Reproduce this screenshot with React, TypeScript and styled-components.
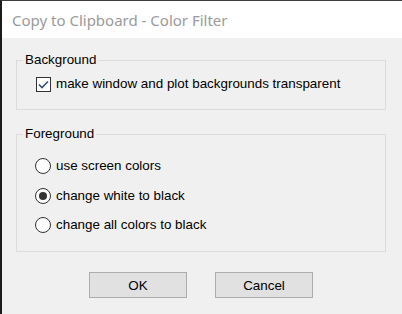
import styled, { createGlobalStyle } from 'styled-components'

const GlobalStyle = createGlobalStyle`
  html, body {
    margin: 0;
    padding: 0;
    background: #f0f0f0;
  }
  * {
    box-sizing: border-box;
  }
`

const Window = styled.div`
  width: 402px;
  height: 314px;
  display: flex;
  flex-direction: column;
  border-left: 2px solid #1b1b1b;
  border-top: 1px solid #3c3c3c;
  background: #f0f0f0;
  font-family: 'Liberation Sans', Arial, sans-serif;
  font-size: 13.4px;
  color: #000;
`

const TitleBar = styled.div`
  height: 37px;
  flex: none;
  display: flex;
  align-items: center;
  padding-left: 10px;
  background: #fff;
  font-family: 'Noto Sans', 'Open Sans', sans-serif;
  font-size: 15px;
  color: #9a9a9a;
`

const Body = styled.div`
  flex: 1;
  display: flex;
  flex-direction: column;
  padding: 14px 16px 0 14px;
`

const GroupBox = styled.fieldset<{ $top: number }>`
  margin: ${({ $top }) => $top}px 0 0;
  padding: 0;
  border: 1px solid #dcdcdc;
  min-width: 0;
`

const Legend = styled.legend`
  margin-left: 6px;
  padding: 0 2px;
  line-height: 16px;
`

const Options = styled.div<{ $pad: string; $gap: number }>`
  display: flex;
  flex-direction: column;
  gap: ${({ $gap }) => $gap}px;
  padding: ${({ $pad }) => $pad};
`

const Option = styled.label`
  display: flex;
  align-items: center;
  gap: 2px;
  height: 16px;
  line-height: 16px;
  white-space: nowrap;
`

const CheckBox = styled.span`
  width: 15px;
  height: 15px;
  flex: none;
  display: flex;
  align-items: center;
  justify-content: center;
  border: 1px solid #333;
  background: #fff;
  margin-right: 3px;
`

const Radio = styled.span<{ $on?: boolean }>`
  width: 16px;
  height: 16px;
  flex: none;
  border-radius: 50%;
  border: 1px solid #333;
  background: #fff;
  display: flex;
  align-items: center;
  justify-content: center;
  margin-right: 3px;

  &::after {
    content: '';
    width: 8px;
    height: 8px;
    border-radius: 50%;
    background: ${({ $on }) => ($on ? '#333' : 'transparent')};
  }
`

const ButtonRow = styled.div`
  display: flex;
  justify-content: center;
  gap: 28px;
  margin-top: 20px;
`

const Button = styled.button`
  width: 98px;
  height: 26px;
  border: 1px solid #adadad;
  background: #e1e1e1;
  font-family: 'Liberation Sans', Arial, sans-serif;
  font-size: 13.4px;
  color: #000;
  padding: 0;
`

const Check = () => (
  <svg width="13" height="13" viewBox="0 0 13 13">
    <path d="M2 6.5 L5 9.5 L11 3.5" fill="none" stroke="#34506e" strokeWidth="1.6" />
  </svg>
)

const App = () => {
  return (
    <Window>
      <GlobalStyle />
      <TitleBar>Copy to Clipboard - Color Filter</TitleBar>
      <Body>
        <GroupBox $top={0}>
          <Legend>Background</Legend>
          <Options $pad="8px 0 17px 19px" $gap={0}>
            <Option>
              <CheckBox>
                <Check />
              </CheckBox>
              make window and plot backgrounds transparent
            </Option>
          </Options>
        </GroupBox>
        <GroupBox $top={16}>
          <Legend>Foreground</Legend>
          <Options $pad="16px 0 18px 18px" $gap={13.5}>
            <Option>
              <Radio />
              use screen colors
            </Option>
            <Option>
              <Radio $on />
              change white to black
            </Option>
            <Option>
              <Radio />
              change all colors to black
            </Option>
          </Options>
        </GroupBox>
        <ButtonRow>
          <Button>OK</Button>
          <Button>Cancel</Button>
        </ButtonRow>
      </Body>
    </Window>
  )
}

export default App
